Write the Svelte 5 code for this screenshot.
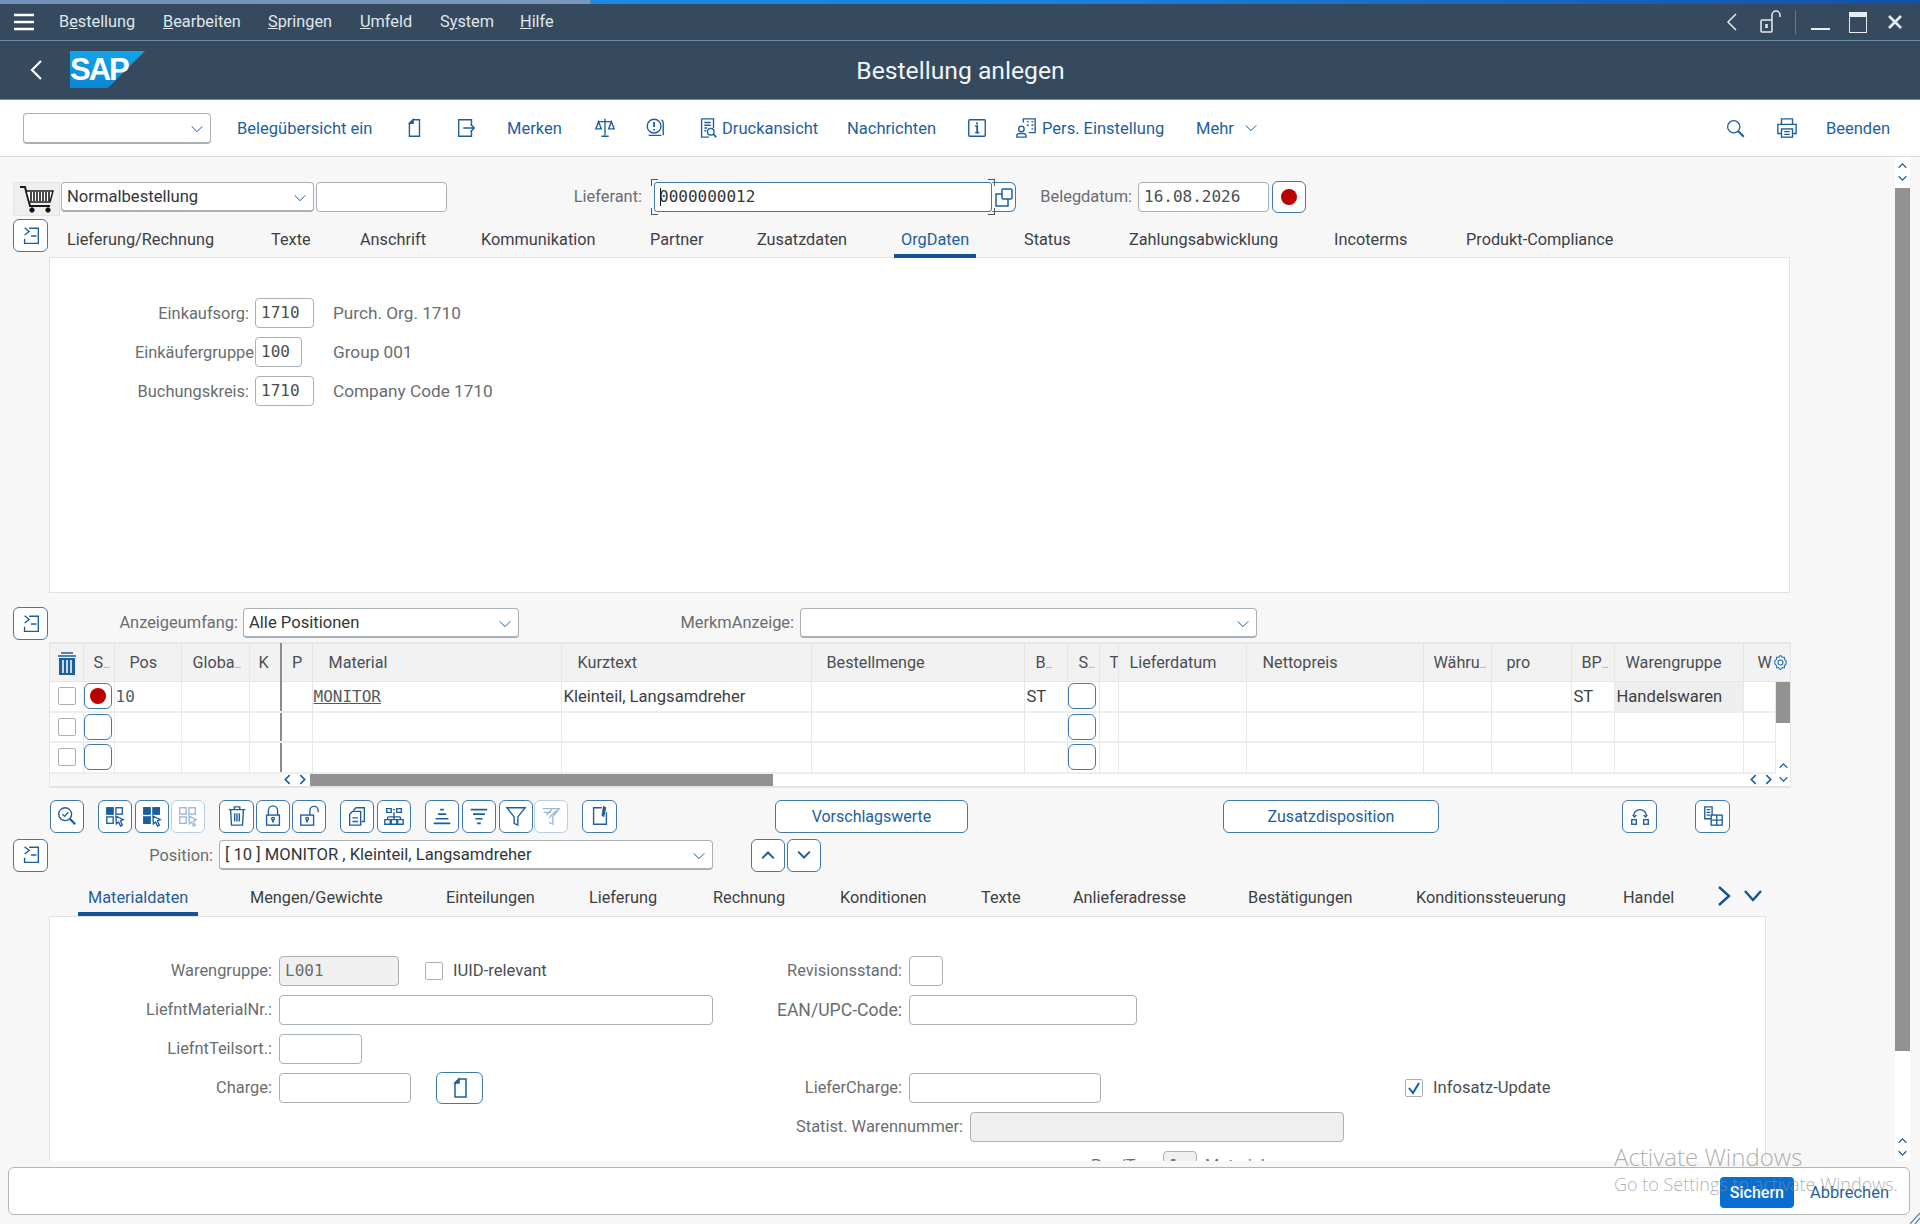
<script>
	const icons = {
		doc: '<path d="M7 7l4-4h7v18H7z"/><path d="M7 7l4-4v4z" fill="currentColor"/>',
		enter: '<path d="M8 3H4v18h4M8 3h10v6M8 21h10v-6"/><path d="M9 12h12M17 8l4 4-4 4"/>',
		scale: '<path d="M12 2v18M8 21h8M5 5h14M5 5l-3 8h6zM19 5l-3 8h6z"/>',
		msg: '<circle cx="11" cy="10" r="7.5"/><path d="M11 5.500v5.500" stroke-width="2"/><path d="M11 13v1.600" stroke-width="2"/><path d="M5 20h14M19 3c2 1 2 3 2 4v13"/>',
		preview: '<path d="M5 2h13v10M5 2v20h8"/><path d="M8 6h7M8 9h7M8 12h3M8 15h2"/><circle cx="15" cy="16" r="3.600"/><path d="M18 19l3 3" stroke-width="2"/>',
		info: '<rect x="3" y="3" width="18" height="18" rx="1"/><path d="M10 10h2.200v7M10 17h4.500" stroke-width="2"/><path d="M12 6v2" stroke-width="2.200"/>',
		pers: '<circle cx="7" cy="13" r="3"/><path d="M2 22v-2a3 3 0 0 1 3-2h4a3 3 0 0 1 3 2v2z"/><path d="M9 6V2h13v15h-7M13 5h2M18 5h2M13 9h2M18 9h2M18 13h2"/>',
		search: '<circle cx="10" cy="10" r="7"/><path d="M15 15l6.500 6.500" stroke-width="2.400"/>',
		print: '<path d="M6 8V2h12v6M6 18H2V8h20v10h-4"/><rect x="6" y="13" width="12" height="9"/><path d="M9 16h6M9 19h6"/>',
		zoom: '<circle cx="10" cy="10" r="7"/><path d="M15 15l6 6" stroke-width="2.400"/><path d="M7 10l2.400 2.400L13.500 8"/>',
		selA: '<rect x="3" y="3" width="7" height="7" fill="currentColor"/><rect x="13" y="3" width="7" height="7"/><rect x="3" y="13" width="7" height="7"/><path d="M13 12l8 4-3 1.400L20 22l-2 1-2-4.400-2.500 2z" fill="#fff"/>',
		selB: '<rect x="3" y="3" width="7" height="7" fill="currentColor"/><rect x="13" y="3" width="7" height="7" fill="currentColor"/><rect x="3" y="13" width="7" height="7" fill="currentColor"/><path d="M13 12l8 4-3 1.400L20 22l-2 1-2-4.400-2.500 2z" fill="#fff"/>',
		selC: '<rect x="3" y="3" width="7" height="7"/><rect x="13" y="3" width="7" height="7"/><rect x="3" y="13" width="7" height="7"/><path d="M13 12l8 4-3 1.400L20 22l-2 1-2-4.400-2.500 2z" fill="#fff"/>',
		trash: '<path d="M3 5h18M9 5V2h6v3M5 5l1 17h12l1-17M9.500 9v9M12 9v9M14.500 9v9"/>',
		lock: '<path d="M7 11V6a5 5 0 0 1 10 0v5"/><rect x="5" y="11" width="14" height="11"/><circle cx="12" cy="15" r="1.500"/><path d="M12 16v3" stroke-width="2"/>',
		unlock: '<path d="M13 11V6a4.500 4.500 0 0 1 9 0v2"/><rect x="3" y="11" width="14" height="11"/><circle cx="10" cy="15" r="1.500"/><path d="M10 16v3" stroke-width="2"/>',
		copy: '<path d="M8 6l3-3h9v15h-3"/><path d="M4 10l3-3h9v15H4zM7 14h6M7 18h6"/>',
		tree: '<path d="M4 4h5v4H4zM15 4h5v4h-5zM11 5h2M12 8v5M5 13h14M5 13v3M12 13v3M19 13v3M2 16h6v5H2zM9 16h6v5H9zM16 16h6v5h-6z"/>',
		sortUp: '<path d="M10 5h4M7.500 10h9M5 15h14M3 20h18" stroke-width="1.800"/>',
		sortDown: '<path d="M3 5h18M5.500 10h13M8 15h8M10 20h4" stroke-width="1.800"/>',
		filter: '<path d="M2 3h20l-8 10v9l-4-2v-7z"/>',
		filterOff: '<path d="M3 4h18l-7 9v8l-4-2M4 8h8M7 11l6-6M10 14l8-8"/>',
		note: '<path d="M14 3H5v18h14V8"/><path d="M16 2l2 1-2 9-1.500-1z" fill="currentColor"/>',
		link: '<path d="M5 12a7 7 0 0 1 14 0"/><path d="M4 11l2 2 2-2M16 11l2 2 2-2" stroke-width="1.600"/><rect x="3" y="16" width="5" height="5"/><rect x="16" y="16" width="5" height="5"/>',
		doctable: '<path d="M3 2h8v13H3zM5 5h4M5 8h4M5 11h4"/><rect x="10" y="11" width="12" height="11" fill="#fff"/><path d="M16 11v11M10 16.500h12"/>',
		chevDown: '<path d="M4 8l8 8 8-8"/>',
		up: '<path d="M5 16l7-7 7 7" stroke-width="2.400"/>',
		down: '<path d="M5 8l7 7 7-7" stroke-width="2.400"/>',
		left: '<path d="M16 4l-8 8 8 8" stroke-width="3"/>',
		right: '<path d="M8 4l8 8-8 8" stroke-width="3"/>',
		gear: '<circle cx="12" cy="12" r="3.500"/><path d="M12 2l2.500 2.500h3v3L20 10v4l-2.500 2.500v3h-3L12 22l-2.500-2.500h-3v-3L4 14v-4l2.500-2.500v-3h3z"/>',
		collapse: '<path d="M5 3l5 4-5 4M10 3.500h10V20H5v-5M12 12h6"/>'
	};

	const menu = [
		['B', 'e', 'stellung'], ['', 'B', 'earbeiten'], ['', 'S', 'pringen'],
		['', 'U', 'mfeld'], ['S', 'y', 'stem'], ['', 'H', 'ilfe']
	];
	const menuW = [104, 105, 92, 80, 80, 60];

	const tools = [
		{ w: 166, text: 'Belegübersicht ein' },
		{ w: 52, icon: 'doc' },
		{ w: 52, icon: 'enter' },
		{ w: 87, text: 'Merken' },
		{ w: 50, icon: 'scale' },
		{ w: 53, icon: 'msg' },
		{ w: 25, icon: 'preview' },
		{ w: 125, text: 'Druckansicht' },
		{ w: 119, text: 'Nachrichten' },
		{ w: 49, icon: 'info' },
		{ w: 27, icon: 'pers' },
		{ w: 154, text: 'Pers. Einstellung' },
		{ w: 47, text: 'Mehr' }
	];

	const headTabs = [
		['Lieferung/Rechnung', 204], ['Texte', 89], ['Anschrift', 121], ['Kommunikation', 169],
		['Partner', 107], ['Zusatzdaten', 144], ['OrgDaten', 123], ['Status', 105],
		['Zahlungsabwicklung', 205], ['Incoterms', 132], ['Produkt-Compliance', 190]
	];
	const itemTabs = [
		['Materialdaten', 162], ['Mengen/Gewichte', 196], ['Einteilungen', 143], ['Lieferung', 124],
		['Rechnung', 127], ['Konditionen', 141], ['Texte', 92], ['Anlieferadresse', 175],
		['Bestätigungen', 168], ['Konditionssteuerung', 207], ['Handel', 92]
	];

	const org = [
		{ label: 'Einkaufsorg:', value: '1710', w: 59, desc: 'Purch. Org. 1710' },
		{ label: 'Einkäufergruppe', value: '100', w: 47, desc: 'Group 001' },
		{ label: 'Buchungskreis:', value: '1710', w: 59, desc: 'Company Code 1710' }
	];

	// x = left edge of the column, pad = where the header text starts
	const cols = [
		{ x: 50, t: '', pad: 0 },
		{ x: 83, t: 'S', more: true, pad: 10 },
		{ x: 114, t: 'Pos', pad: 15 },
		{ x: 181, t: 'Globa', more: true, pad: 11 },
		{ x: 249, t: 'K', pad: 9 },
		{ x: 281, t: 'P', pad: 10 },
		{ x: 312, t: 'Material', pad: 16 },
		{ x: 561, t: 'Kurztext', pad: 16 },
		{ x: 811, t: 'Bestellmenge', pad: 15 },
		{ x: 1024, t: 'B', more: true, pad: 11 },
		{ x: 1067, t: 'S', more: true, pad: 11 },
		{ x: 1099, t: 'T', pad: 10 },
		{ x: 1118, t: 'Lieferdatum', pad: 11 },
		{ x: 1246, t: 'Nettopreis', pad: 16 },
		{ x: 1423, t: 'Währu', more: true, pad: 10 },
		{ x: 1491, t: 'pro', pad: 15 },
		{ x: 1571, t: 'BP', more: true, pad: 10 },
		{ x: 1614, t: 'Warengruppe', pad: 11 },
		{ x: 1743, t: 'W', pad: 14 }
	];
	const colEnd = 1775;
	const widths = cols.map((c, i) => (i + 1 < cols.length ? cols[i + 1].x : colEnd) - c.x);

	const rows = [0, 1, 2];

	const actionDefs = [
		{ x: 50, w: 34, icon: 'zoom' },
		{ x: 98, w: 34, icon: 'selA' },
		{ x: 135, w: 34, icon: 'selB' },
		{ x: 171, w: 34, icon: 'selC', off: true },
		{ x: 219, w: 35, icon: 'trash' },
		{ x: 256, w: 34, icon: 'lock' },
		{ x: 292, w: 34, icon: 'unlock' },
		{ x: 340, w: 34, icon: 'copy' },
		{ x: 377, w: 34, icon: 'tree' },
		{ x: 425, w: 34, icon: 'sortUp' },
		{ x: 462, w: 34, icon: 'sortDown' },
		{ x: 499, w: 34, icon: 'filter' },
		{ x: 534, w: 34, icon: 'filterOff', off: true },
		{ x: 582, w: 35, icon: 'note' },
		{ x: 775, w: 193, text: 'Vorschlagswerte' },
		{ x: 1223, w: 216, text: 'Zusatzdisposition' },
		{ x: 1622, w: 35, icon: 'link' },
		{ x: 1695, w: 35, icon: 'doctable' }
	];
	const actions = actionDefs.map((a, i) => {
		const prev = i ? actionDefs[i - 1].x + actionDefs[i - 1].w : 50;
		return { ...a, ml: a.x - prev };
	});
</script>

{#snippet ic(name, size = 22)}
	<svg class="ic" width={size} height={size} viewBox="0 0 24 24">{@html icons[name]}</svg>
{/snippet}

{#snippet collapseBtn()}
	<button class="btn square">{@render ic('collapse', 22)}</button>
{/snippet}

<div class="page">
	<div class="strip"></div>

	<div class="menubar">
		<span class="burger">
			<svg width="22" height="18" viewBox="0 0 22 18"><path d="M1 2h20M1 9h20M1 16h20" stroke="#fff" stroke-width="2.400"/></svg>
		</span>
		{#each menu as m, i}
			<span class="menuitem" style="width:{menuW[i]}px">{m[0]}<u>{m[1]}</u>{m[2]}</span>
		{/each}
		<span class="winctl">
			<svg class="light" width="14" height="20" viewBox="0 0 14 20"><path d="M11 2L3 10l8 8"/></svg>
			<svg class="light lockic" width="22" height="24" viewBox="0 0 22 24"><rect x="2" y="10" width="11" height="12" rx="1"/><path d="M13 10V5a4 4 0 0 1 8 0v2"/><path d="M7.500 14v4" stroke-width="2.500"/></svg>
			<span class="sep"></span>
			<span class="minus"></span>
			<span class="maxi"></span>
			<svg class="light" width="18" height="18" viewBox="0 0 18 18"><path d="M3 3l12 12M15 3L3 15" stroke-width="2.600"/></svg>
		</span>
	</div>

	<div class="titlebar">
		<svg class="back" width="16" height="24" viewBox="0 0 16 24"><path d="M13 3L4 12l9 9" fill="none" stroke="#fff" stroke-width="2.200"/></svg>
		<svg class="logo" width="75" height="37" viewBox="0 0 75 37">
			<defs>
				<linearGradient id="sapblue" x1="0" y1="0" x2="0" y2="1">
					<stop offset="0" stop-color="#12a5e8"/>
					<stop offset="1" stop-color="#0a86d6"/>
				</linearGradient>
			</defs>
			<polygon points="0,0 75,0 38,37 0,37" fill="url(#sapblue)"/>
			<text x="0" y="29" class="logotext">SAP</text>
		</svg>
		<h1>Bestellung anlegen</h1>
	</div>

	<div class="toolbar">
		<div class="select tb-select">{@render ic('chevDown', 16)}</div>
		<div class="tools">
			{#each tools as t}
				<span class="tool" style="width:{t.w}px">
					{#if t.icon}{@render ic(t.icon, 22)}{:else}{t.text}{/if}
				</span>
			{/each}
			<span class="tool">{@render ic('chevDown', 16)}</span>
		</div>
		<div class="tools right">
			<span class="tool" style="width:51px">{@render ic('search', 21)}</span>
			<span class="tool" style="width:50px">{@render ic('print', 22)}</span>
			<span class="tool">Beenden</span>
		</div>
	</div>

	<div class="body">
		<div class="content">
			<div class="headrow">
				<span class="cart">
					<svg width="36" height="30" viewBox="0 0 36 30" fill="none" stroke="#1a1a1a">
						<path d="M1 3h5l5 19h20" stroke-width="2"/>
						<path d="M7 7h27l-3 11H10z" fill="#fff" stroke-width="1.500"/>
						<path d="M12 8v9M15 8v9M18 8v9M21 8v9M24 8v9M27 8v9M30 8v9" stroke-width="1.600"/>
						<circle cx="13" cy="26" r="2.200" fill="#111"/><circle cx="29" cy="26" r="2.200" fill="#111"/>
					</svg>
				</span>
				<div class="select normal">Normalbestellung{@render ic('chevDown', 16)}</div>
				<div class="input smallin"></div>
				<span class="lb lief">Lieferant:</span>
				<div class="focus">
					<span class="mono">0000000012</span>
					<span class="caret"></span>
					<i class="c tl"></i><i class="c tr"></i><i class="c bl"></i><i class="c br"></i>
				</div>
				<button class="f4" aria-label="Suchhilfe">
					<svg width="22" height="26" viewBox="0 0 22 26" fill="none" stroke="currentColor" stroke-width="1.500"><rect x="9" y="5" width="10" height="10" rx="1"/><path d="M9 10H3v12h12v-7"/></svg>
				</button>
				<span class="lb beleg">Belegdatum:</span>
				<div class="input date mono">16.08.2026</div>
				<button class="btn status-top"><span class="dot"></span></button>
			</div>

			<div class="tabrow">
				{@render collapseBtn()}
				<div class="tabs top">
					{#each headTabs as [t, w]}
						<span class="tab" style="width:{w}px"><span class="tabin" class:active={t === 'OrgDaten'}>{t}</span></span>
					{/each}
				</div>
			</div>

			<div class="panel orgpanel">
				{#each org as o}
					<div class="orgrow">
						<span class="lb orglb">{o.label}</span>
						<span class="orgcell"><span class="input mono orgin" style="width:{o.w}px">{o.value}</span></span>
						<span class="lb desc">{o.desc}</span>
					</div>
				{/each}
			</div>

			<div class="itemhead">
				{@render collapseBtn()}
				<span class="lb anz">Anzeigeumfang:</span>
				<div class="select alle">Alle Positionen{@render ic('chevDown', 16)}</div>
				<span class="lb merk">MerkmAnzeige:</span>
				<div class="select merkin">{@render ic('chevDown', 16)}</div>
			</div>

			<div class="grid">
				<table>
					<colgroup>
						{#each widths as w}<col style="width:{w}px" />{/each}
						<col style="width:15px" />
					</colgroup>
					<thead>
						<tr>
							{#each cols as c, i}
								<th class:divider={i === 4} colspan={i === 18 ? 2 : 1} style="padding-left:{c.pad}px">
									{#if i === 0}
										<svg class="trashhead" width="20" height="24" viewBox="0 0 20 24"><path d="M4 1h12M1 4h18" stroke="#1d5f9e" stroke-width="1.500"/><rect x="2" y="6" width="16" height="17" fill="#1d5f9e"/><path d="M6 8v13M10 8v13M14 8v13" stroke="#fff" stroke-width="1.500"/></svg>
									{:else}
										{c.t}{#if c.more}<span class="more">…</span>{/if}
									{/if}
									{#if i === 18}<span class="gear">{@render ic('gear', 17)}</span>{/if}
								</th>
							{/each}
						</tr>
					</thead>
					<tbody>
						{#each rows as r}
							<tr>
								<td><span class="chk gridchk"></span></td>
								<td class="btncell"><button class="btn stat">{#if r === 0}<span class="dot"></span>{/if}</button></td>
								<td class="mono">{r === 0 ? '10' : ''}</td>
								<td></td>
								<td class="divider"></td>
								<td></td>
								<td class="mono"><u>{r === 0 ? 'MONITOR' : ''}</u></td>
								<td>{r === 0 ? 'Kleinteil, Langsamdreher' : ''}</td>
								<td></td>
								<td>{r === 0 ? 'ST' : ''}</td>
								<td class="btncell"><button class="btn stat"></button></td>
								<td></td>
								<td></td>
								<td></td>
								<td></td>
								<td></td>
								<td>{r === 0 ? 'ST' : ''}</td>
								<td class:ro={r === 0}>{r === 0 ? 'Handelswaren' : ''}</td>
								<td></td>
								{#if r === 0}
									<td rowspan="3" class="vs">
										<span class="vthumb"></span>
										<span class="vsarrows">{@render ic('up', 13)}</span>
									</td>
								{/if}
							</tr>
						{/each}
					</tbody>
				</table>
				<div class="hscroll">
					<span class="harrows">{@render ic('left', 13)}{@render ic('right', 13)}</span>
					<span class="hthumb"></span>
					<span class="hend">{@render ic('left', 13)}{@render ic('right', 13)}{@render ic('down', 13)}</span>
				</div>
			</div>

			<div class="actions">
				{#each actions as a}
					<button class="btn act" class:off={a.off} style="width:{a.w}px;margin-left:{a.ml}px">
						{#if a.icon}{@render ic(a.icon, 22)}{:else}{a.text}{/if}
					</button>
				{/each}
			</div>

			<div class="posrow">
				{@render collapseBtn()}
				<span class="lb poslb">Position:</span>
				<div class="select possel">[ 10 ] MONITOR , Kleinteil, Langsamdreher{@render ic('chevDown', 16)}</div>
				<button class="btn arrow first">{@render ic('up', 20)}</button>
				<button class="btn arrow">{@render ic('down', 20)}</button>
			</div>

			<div class="tabs item">
				{#each itemTabs as [t, w]}
					<span class="tab" style="width:{w}px"><span class="tabin" class:active={t === 'Materialdaten'}>{t}</span></span>
				{/each}
				<span class="tabnav">
					<svg width="16" height="22" viewBox="0 0 16 22"><path d="M3 2l10 9-10 9" fill="none" stroke="#0f5597" stroke-width="2.400"/></svg>
					<svg width="20" height="14" viewBox="0 0 20 14"><path d="M2 2l8 9 8-9" fill="none" stroke="#0f5597" stroke-width="2.400"/></svg>
				</span>
			</div>

			<div class="panel matpanel">
				<span class="lb fl">Warengruppe:</span>
				<span class="fv"><span class="input ro mono w120">L001</span><span class="chk iuid"></span><span class="txt">IUID-relevant</span></span>
				<span class="lb fl">Revisionsstand:</span>
				<span class="fv span2"><span class="input w34"></span></span>

				<span class="lb fl">LiefntMaterialNr.:</span>
				<span class="fv"><span class="input w434"></span></span>
				<span class="lb fl ean">EAN/UPC-Code:</span>
				<span class="fv span2"><span class="input w228"></span></span>

				<span class="lb fl">LiefntTeilsort.:</span>
				<span class="fv wide"><span class="input w83"></span></span>

				<span class="lb fl">Charge:</span>
				<span class="fv"><span class="input w132"></span><button class="btn docbtn">{@render ic('doc', 24)}</button></span>
				<span class="lb fl">LieferCharge:</span>
				<span class="fv"><span class="input w192"></span></span>
				<span class="fv infosatz"><span class="chk checked"><svg width="14" height="14" viewBox="0 0 14 14"><path d="M2 7l4 5 6-10" fill="none" stroke="#0f5fa8" stroke-width="2"/></svg></span><span class="txt">Infosatz-Update</span></span>

				<span class="statrow">
					<span class="lb">Statist. Warennummer:</span>
					<span class="input ro w374"></span>
				</span>

				<span class="statrow">
					<span class="lb lastlb">Pos/Typ:</span>
					<span class="input ro mono w34 last">1</span>
					<span class="lb lastafter">Material</span>
				</span>
			</div>
		</div>

		<div class="vbar">
			<span class="vbtn">{@render ic('up', 13)}{@render ic('down', 13)}</span>
			<span class="vbarthumb"></span>
			<span class="vbtn bottom">{@render ic('up', 13)}{@render ic('down', 13)}</span>
		</div>
	</div>

	<div class="footer">
		<div class="cmd">
			<button class="save">Sichern</button>
			<span class="cancel">Abbrechen</span>
		</div>
		<svg class="grip" width="10" height="12" viewBox="0 0 10 12"><path d="M0 12L10 1M5 12l5-6" stroke="#5b83a8" stroke-width="1.200"/></svg>
	</div>

	<div class="watermark">
		<div class="wm1">Activate Windows</div>
		<div class="wm2">Go to Settings to activate Windows.</div>
	</div>
</div>

<style>
	:global(body) {
		margin: 0;
		background: #f7f7f7;
	}

	.page {
		position: relative;
		width: 1920px;
		height: 1224px;
		overflow: hidden;
		font-family: Roboto, "Liberation Sans", sans-serif;
		font-size: 16px;
		color: #32363a;
		background: #f7f7f7;
	}

	.ic {
		fill: none;
		stroke: currentColor;
		stroke-width: 1.5;
		flex: none;
		display: block;
	}

	.mono {
		font-family: "DejaVu Sans Mono", "Liberation Mono", monospace;
		font-size: 16px;
	}

	.strip {
		height: 4px;
		background: linear-gradient(90deg, #7090b4 0, #7a98ba 590px, #1a8ae2 591px, #1a7fd8 1100px, #1450a8 1920px);
	}

	.menubar {
		height: 36px;
		background: #354a5f;
		border-bottom: 1px solid #6d8aa3;
		display: flex;
		align-items: center;
		color: #dfe6ec;
	}

	.burger {
		width: 59px;
		padding-left: 13px;
		box-sizing: border-box;
		display: flex;
	}

	.menuitem {
		flex: none;
		font-size: 16.3px;
		margin-top: -2px;
	}

	.winctl {
		margin-left: auto;
		display: flex;
		align-items: center;
		padding-right: 16px;
		height: 100%;
	}

	.light {
		fill: none;
		stroke: #e6ecf1;
		stroke-width: 1.5;
	}

	.lockic {
		margin-left: 20px;
	}

	.sep {
		width: 1px;
		height: 24px;
		background: #5f7a91;
		margin: 0 15px 0 14px;
	}

	.minus {
		width: 19px;
		height: 2px;
		background: #e6ecf1;
		margin-top: 14px;
	}

	.maxi {
		width: 16px;
		height: 15px;
		border: 1.5px solid #e6ecf1;
		border-top: 5px solid #e6ecf1;
		margin: 0 19px;
	}

	.titlebar {
		height: 58px;
		background: #354a5f;
		border-bottom: 1px solid #7c8b99;
		display: flex;
		align-items: center;
		position: relative;
		padding-left: 28px;
	}

	.back {
		margin-right: 26px;
	}

	.logo {
		margin-top: -2px;
	}

	.logotext {
		font-family: "Liberation Sans", sans-serif;
		font-weight: 700;
		font-size: 31px;
		letter-spacing: -2px;
		fill: #fff;
	}

	h1 {
		position: absolute;
		left: 0;
		right: 0;
		margin: 0;
		text-align: center;
		padding-left: 1px;
		font-size: 24.7px;
		font-weight: 400;
		color: #f2f5f7;
	}

	.toolbar {
		height: 56px;
		background: #fff;
		border-bottom: 1px solid #dcdcdc;
		display: flex;
		align-items: center;
		padding: 0 30px 0 23px;
		color: #1d5f9e;
	}

	.tools {
		display: flex;
		align-items: center;
		margin-left: 26px;
	}

	.tools.right {
		margin-left: auto;
	}

	.tool {
		display: flex;
		align-items: center;
		flex: none;
		white-space: nowrap;
		font-size: 16.5px;
		color: #1d5f9e;
	}

	.select {
		box-sizing: border-box;
		background: #fff;
		border: 1px solid #a9b0b6;
		border-bottom-width: 2px;
		border-radius: 4px;
		height: 30px;
		display: flex;
		align-items: center;
		justify-content: space-between;
		padding: 0 5px 0 5px;
		flex: none;
		color: #32363a;
		font-size: 16.6px;
	}

	.select .ic {
		color: #1d5f9e;
		margin-left: auto;
		margin-top: 2px;
	}

	.tb-select {
		width: 188px;
		height: 31px;
	}

	.input {
		box-sizing: border-box;
		display: block;
		background: #fff;
		border: 1px solid #a9b0b6;
		border-radius: 4px;
		height: 30px;
		line-height: 27px;
		padding: 0 5px;
		flex: none;
	}

	.input.ro {
		background: #f0f0f0;
		color: #6a6d70;
	}

	.lb {
		color: #6a6d70;
		font-size: 16.4px;
		white-space: nowrap;
		flex: none;
	}

	.desc {
		font-size: 17.2px;
	}

	.ean {
		font-size: 17.6px;
	}

	.txt {
		color: #4a4e52;
		white-space: nowrap;
		font-size: 16.6px;
	}

	.btn {
		box-sizing: border-box;
		background: #fff;
		border: 1.5px solid #3f79ad;
		border-radius: 6px;
		color: #1d5f9e;
		padding: 0;
		display: flex;
		align-items: center;
		justify-content: center;
		font: inherit;
		flex: none;
	}

	.square {
		width: 35px;
		height: 33px;
	}

	.dot {
		display: block;
		width: 16px;
		height: 16px;
		border-radius: 50%;
		background: #bb0000;
	}

	.body {
		height: 1004px;
		display: flex;
		overflow: hidden;
	}

	.content {
		width: 1895px;
		flex: none;
		display: flex;
		flex-direction: column;
	}

	.vbar {
		width: 15px;
		flex: none;
		background: #fff;
		display: flex;
		flex-direction: column;
		align-items: center;
		color: #1d5f9e;
	}

	.vbtn {
		height: 31px;
		display: flex;
		flex-direction: column;
		justify-content: flex-end;
		box-sizing: border-box;
		padding-bottom: 3px;
	}

	.vbtn.bottom {
		margin-top: auto;
		height: 30px;
		padding-bottom: 1px;
	}

	.vbarthumb {
		width: 15px;
		height: 863px;
		background: #929292;
	}

	.headrow {
		display: flex;
		align-items: flex-start;
		padding-left: 13px;
		height: 37px;
		margin-top: 25px;
		flex: none;
	}

	.cart {
		width: 47px;
		height: 34px;
		background: #efefef;
		border: 1px solid #e4e4e4;
		box-sizing: border-box;
		display: flex;
		align-items: center;
		justify-content: center;
	}

	.normal {
		width: 253px;
		margin-left: 1px;
	}

	.smallin {
		width: 131px;
		margin-left: 2px;
	}

	.lief {
		width: 195px;
		text-align: right;
		line-height: 30px;
	}

	.focus {
		box-sizing: border-box;
		width: 338px;
		height: 30px;
		margin-left: 12px;
		background: #fff;
		border: 1.5px solid #3f79ad;
		border-radius: 3px;
		position: relative;
		padding-left: 4px;
		line-height: 27px;
		flex: none;
	}

	.caret {
		position: absolute;
		left: 5px;
		top: 5px;
		width: 1px;
		height: 18px;
		background: #222;
	}

	.c {
		position: absolute;
		width: 6px;
		height: 6px;
		border: 0 solid #555;
	}

	.tl { left: -4px; top: -4px; border-width: 1.5px 0 0 1.5px; }
	.tr { right: -4px; top: -4px; border-width: 1.5px 1.5px 0 0; }
	.bl { left: -4px; bottom: -4px; border-width: 0 0 1.5px 1.5px; }
	.br { right: -4px; bottom: -4px; border-width: 0 1.5px 1.5px 0; }

	.f4 {
		box-sizing: border-box;
		width: 24px;
		height: 30px;
		background: #fff;
		border: 1.5px solid #3f79ad;
		border-left: 0;
		border-radius: 0 6px 6px 0;
		color: #1d5f9e;
		padding: 0;
		display: flex;
		align-items: center;
		justify-content: center;
		flex: none;
	}

	.beleg {
		width: 116px;
		text-align: right;
		line-height: 30px;
	}

	.date {
		width: 131px;
		margin-left: 6px;
		color: #4a4e52;
	}

	.status-top {
		width: 34px;
		height: 32px;
		margin: -1px 0 0 3px;
	}

	.tabrow {
		display: flex;
		align-items: flex-start;
		padding-left: 13px;
		height: 38px;
		flex: none;
	}

	.tabs {
		display: flex;
		flex: none;
		position: relative;
	}

	.tabs.top {
		margin-left: 12px;
		height: 39px;
	}

	.tab {
		flex: none;
		display: block;
		white-space: nowrap;
	}

	.tabin {
		display: inline-block;
		box-sizing: border-box;
		font-size: 16.3px;
		color: #3c4045;
		border-bottom: 4px solid transparent;
	}

	.tabs.top .tabin {
		padding: 11px 7px 0;
		height: 39px;
	}

	.tabs.item {
		height: 44px;
		padding-left: 78px;
		align-items: flex-start;
	}

	.tabs.item .tabin {
		padding: 16px 10px 0;
		height: 44px;
	}

	.tabin.active {
		color: #1d5f9e;
		border-bottom-color: #0f5597;
	}

	.tabnav {
		display: flex;
		align-items: center;
		gap: 11px;
		margin: 13px 0 0 11px;
	}

	.panel {
		margin-left: 49px;
		background: #fff;
		border: 1px solid #e3e3e3;
		box-sizing: border-box;
		flex: none;
	}

	.orgpanel {
		width: 1741px;
		height: 336px;
		padding-top: 40px;
		display: flex;
		flex-direction: column;
		gap: 9px;
	}

	.orgrow {
		display: flex;
		align-items: center;
		height: 30px;
	}

	.orglb {
		width: 204px;
		text-align: right;
		margin-right: 1px;
	}

	.orgrow:nth-child(odd) .orglb {
		width: 199px;
		margin-right: 6px;
	}

	.orgcell {
		width: 78px;
		flex: none;
	}

	.orgin {
		color: #4a4e52;
	}

	.itemhead {
		display: flex;
		align-items: flex-start;
		padding-left: 13px;
		height: 36px;
		margin-top: 14px;
		flex: none;
	}

	.anz {
		width: 190px;
		text-align: right;
		line-height: 32px;
	}

	.alle {
		width: 276px;
		margin: 1px 0 0 5px;
	}

	.merk {
		width: 275px;
		text-align: right;
		line-height: 32px;
	}

	.merkin {
		width: 457px;
		margin: 1px 0 0 6px;
	}

	.grid {
		margin-left: 50px;
		width: 1740px;
		flex: none;
		background: #fff;
		border-bottom: 1px solid #e3e3e3;
		outline: 1px solid #e6e6e6;
	}

	table {
		border-collapse: collapse;
		table-layout: fixed;
		width: 1740px;
	}

	th {
		height: 38px;
		padding: 0;
		box-sizing: border-box;
		background: #f2f2f2;
		border: 1px solid #e6e6e6;
		border-left: 0;
		text-align: left;
		font-weight: 400;
		font-size: 16.2px;
		color: #4a4e52;
		position: relative;
		white-space: nowrap;
		overflow: hidden;
	}

	th:last-child {
		border-right: 1px solid #e6e6e6;
	}

	td {
		height: 30px;
		padding: 0 0 0 2px;
		box-sizing: border-box;
		border-right: 1px solid #e8e8e8;
		border-bottom: 2px solid #eeeeee;
		white-space: nowrap;
		overflow: hidden;
		font-size: 16.6px;
		color: #3c4045;
	}

	tbody tr:nth-child(3) td {
		height: 31px;
	}

	th.divider,
	td.divider {
		border-right: 2px solid #8c8c8c;
	}

	td.ro {
		background: #eeeeee;
	}

	td.btncell {
		padding: 0;
	}

	td.mono {
		font-size: 16px;
		padding-left: 1px;
		color: #555a5f;
	}

	.more {
		font-size: 10px;
		color: #8a8a8a;
	}

	.trashhead {
		display: block;
		margin: 2px 0 0 7px;
	}

	.gear {
		position: absolute;
		right: 1px;
		top: 10px;
		color: #1d6fb8;
	}

	.chk {
		box-sizing: border-box;
		display: block;
		width: 18px;
		height: 18px;
		border: 1.5px solid #a9b0b6;
		border-radius: 2px;
		background: #fff;
		flex: none;
	}

	.gridchk {
		margin-left: 6px;
	}

	.stat {
		width: 28px;
		height: 26px;
		margin-left: 0;
	}

	.vs {
		padding: 0;
		border: 0;
		position: relative;
		vertical-align: top;
		color: #1d5f9e;
	}

	.vthumb {
		display: block;
		width: 15px;
		height: 41px;
		background: #929292;
	}

	.vsarrows {
		position: absolute;
		bottom: 1px;
		left: 1px;
	}

	.hscroll {
		height: 12px;
		display: flex;
		align-items: stretch;
		padding-left: 231px;
		color: #1d5f9e;
		background: linear-gradient(90deg, #f7f7f7 231px, #fff 231px);
	}

	.harrows,
	.hend {
		display: flex;
		align-items: center;
		gap: 2px;
	}

	.hthumb {
		width: 463px;
		background: #929292;
		margin-left: 1px;
	}

	.hend {
		margin-left: auto;
	}

	.actions {
		display: flex;
		margin-top: 13px;
		padding-left: 50px;
		flex: none;
	}

	.act {
		height: 33px;
		font-size: 16px;
	}

	.act.off {
		border-color: #b9cfe1;
		color: #9db9d2;
	}

	.posrow {
		display: flex;
		align-items: center;
		padding-left: 13px;
		margin-top: 6px;
		height: 33px;
		flex: none;
	}

	.poslb {
		width: 165px;
		text-align: right;
	}

	.possel {
		width: 494px;
		margin-left: 6px;
	}

	.arrow {
		width: 34px;
		height: 33px;
		margin-left: 2px;
	}

	.arrow.first {
		margin-left: 38px;
	}

	.matpanel {
		width: 1717px;
		height: 264px;
		padding-top: 39px;
		overflow: hidden;
		display: grid;
		grid-template-columns: 229px 434px 196px 496px 1fr;
		grid-auto-rows: 30px;
		row-gap: 9px;
	}

	.fl {
		text-align: right;
		padding-right: 7px;
		line-height: 30px;
	}

	.fv {
		display: flex;
		align-items: center;
	}

	.fv.span2 {
		grid-column: span 2;
	}

	.fv.wide {
		grid-column: span 4;
	}

	.iuid {
		margin: 0 10px 0 26px;
	}

	.w34 { width: 34px; }
	.w83 { width: 83px; }
	.w120 { width: 120px; }
	.w132 { width: 132px; }
	.w192 { width: 192px; }
	.w228 { width: 228px; }
	.w374 { width: 374px; }
	.w434 { width: 434px; }

	.docbtn {
		width: 47px;
		height: 32px;
		margin-left: 25px;
	}

	.infosatz {
		gap: 10px;
	}

	.checked {
		display: flex;
		align-items: center;
		justify-content: center;
	}

	.statrow {
		grid-column: 1 / -1;
		display: flex;
		align-items: center;
	}

	.statrow .lb {
		width: 913px;
		text-align: right;
		margin-right: 7px;
	}

	.statrow .lastlb {
		width: 1106px;
		margin-right: 7px;
	}

	.statrow .lastafter {
		width: auto;
		margin-left: 8px;
	}

	.footer {
		height: 63px;
		position: relative;
		padding: 6px 10px 0 8px;
		box-sizing: border-box;
	}

	.cmd {
		box-sizing: border-box;
		height: 48px;
		background: #fff;
		border: 1.5px solid #b3b6b9;
		border-radius: 6px;
		display: flex;
		align-items: center;
		justify-content: flex-end;
		padding: 0 20px 0 0;
	}

	.save {
		width: 74px;
		height: 31px;
		background: #0a6ed1;
		color: #fff;
		border: 0;
		border-radius: 4px;
		font: 500 16px Roboto, sans-serif;
		padding: 0;
		margin-top: 2px;
	}

	.cancel {
		color: #1d5f9e;
		margin: 2px 0 0 16px;
		font-size: 16.5px;
	}

	.grip {
		position: absolute;
		right: 0;
		bottom: 0;
	}

	.watermark {
		position: absolute;
		left: 1614px;
		top: 1141px;
		font-family: "Open Sans", sans-serif;
		font-weight: 300;
		color: rgba(140, 140, 140, 0.7);
		white-space: nowrap;
		pointer-events: none;
	}

	.wm1 {
		font-size: 24px;
		line-height: 32px;
	}

	.wm2 {
		font-size: 18px;
		line-height: 24px;
		margin-top: -1px;
	}
</style>
